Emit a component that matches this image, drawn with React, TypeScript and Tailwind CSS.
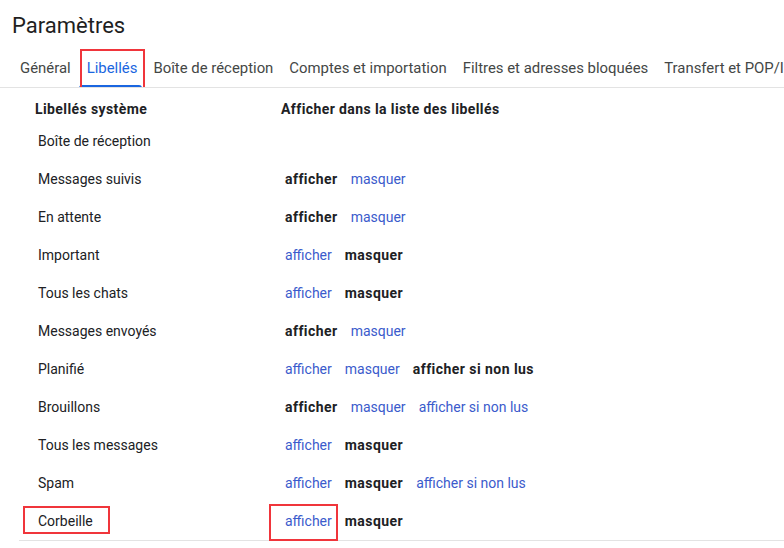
import React from "react";

type Action = { label: string; bold?: boolean; boxed?: boolean };

const tabs = [
  "Général",
  "Libellés",
  "Boîte de réception",
  "Comptes et importation",
  "Filtres et adresses bloquées",
  "Transfert et POP/IMAP",
  "Modules complémentaires",
];

const show = (bold: boolean, boxed = false): Action => ({ label: "afficher", bold, boxed });
const hide = (bold: boolean): Action => ({ label: "masquer", bold });
const unread = (bold: boolean): Action => ({ label: "afficher si non lus", bold });

const rows: { name: string; boxed?: boolean; actions: Action[] }[] = [
  { name: "Boîte de réception", actions: [] },
  { name: "Messages suivis", actions: [show(true), hide(false)] },
  { name: "En attente", actions: [show(true), hide(false)] },
  { name: "Important", actions: [show(false), hide(true)] },
  { name: "Tous les chats", actions: [show(false), hide(true)] },
  { name: "Messages envoyés", actions: [show(true), hide(false)] },
  { name: "Planifié", actions: [show(false), hide(false), unread(true)] },
  { name: "Brouillons", actions: [show(true), hide(false), unread(false)] },
  { name: "Tous les messages", actions: [show(false), hide(true)] },
  { name: "Spam", actions: [show(false), hide(true), unread(false)] },
  { name: "Corbeille", boxed: true, actions: [show(false, true), hide(true)] },
];

function ActionLink({ action }: { action: Action }) {
  const cls = action.bold
    ? "font-bold tracking-[0.45px] text-[#202124]"
    : "text-[#3b5bcc] cursor-pointer";
  return (
    <span className={`relative ${cls}`}>
      {action.label}
      {action.boxed && (
        <span className="absolute left-[-16px] right-[-6px] top-[-7px] bottom-[-9px] border-2 border-[#f0353b]" />
      )}
    </span>
  );
}

export default function App() {
  return (
    <div
      className="w-[784px] h-[548px] overflow-hidden bg-white text-[#202124]"
      style={{ fontFamily: "Roboto, 'Liberation Sans', sans-serif" }}
    >
      <h1 className="pl-3 pt-[12px] h-[48px] text-[22px] leading-[28px] text-[#1f1f1f]">Paramètres</h1>

      <div className="flex h-[40px] border-b border-[#e3e3e3] pl-3 whitespace-nowrap text-[14.9px] text-[#444746] overflow-hidden">
        {tabs.map((t) => {
          const active = t === "Libellés";
          return (
            <div
              key={t}
              className={`relative flex items-center px-2 pt-[2px] shrink-0 ${active ? "text-[#1a66e0]" : ""}`}
            >
              {t}
              {active && (
                <>
                  <span className="absolute left-0 right-[3px] bottom-[-1px] h-[3px] rounded-t-[3px] bg-[#1a66e0]" />
                  <span className="absolute left-[1px] right-0 top-[1px] bottom-[-2px] border-2 border-[#f0353b]" />
                </>
              )}
            </div>
          );
        })}
      </div>

      <div className="ml-[19px] border-b border-[#e3e3e3] text-[14px]">
        <div className="grid grid-cols-[246px_1fr] h-[34px] pt-[8px] items-center font-bold tracking-[0.4px]">
          <div className="pl-4">Libellés système</div>
          <div className="pl-4">Afficher dans la liste des libellés</div>
        </div>
        {rows.map((r) => (
          <div key={r.name} className="grid grid-cols-[246px_1fr] h-[38px] items-center">
            <div className="pl-[19px]">
              <span className="relative">
                {r.name}
                {r.boxed && (
                  <span className="absolute left-[-15px] right-[-17px] top-[-7px] bottom-[-5px] border-2 border-[#f0353b]" />
                )}
              </span>
            </div>
            <div className="pl-5 flex gap-[13px]">
              {r.actions.map((a, i) => (
                <ActionLink key={i} action={a} />
              ))}
            </div>
          </div>
        ))}
      </div>
    </div>
  );
}
